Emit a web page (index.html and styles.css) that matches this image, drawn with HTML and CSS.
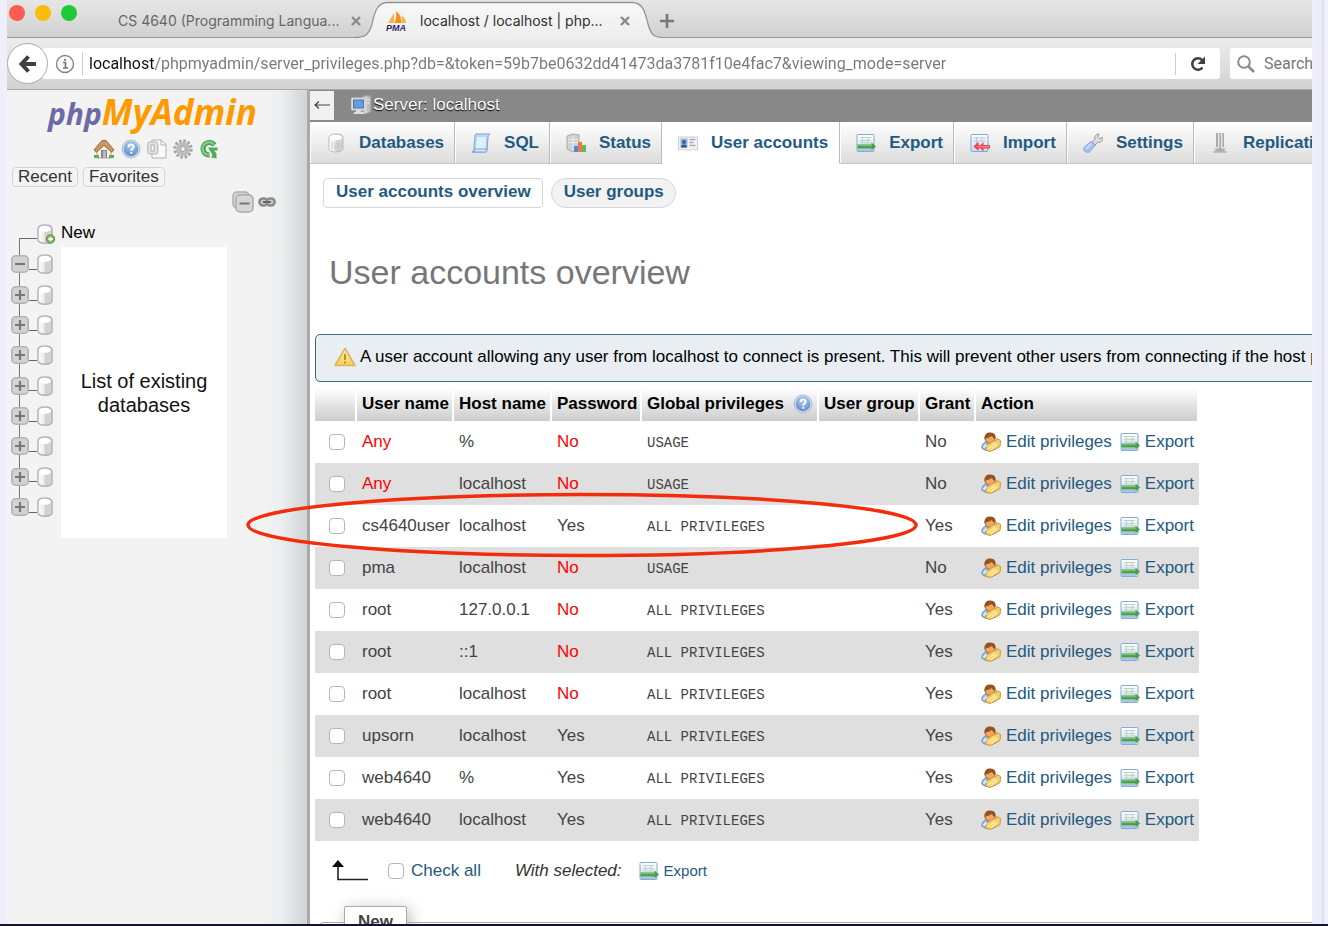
FILE: index.html
```html
<!DOCTYPE html>
<html lang="en">
<head>
<meta charset="utf-8">
<title>localhost / localhost | phpMyAdmin</title>
<link rel="stylesheet" href="styles.css">
</head>
<body>
<svg class="defs" aria-hidden="true">
  <defs>
    <linearGradient id="cyl" x1="0" x2="1" y1="0" y2="0"><stop offset="0" stop-color="#fff"/><stop offset=".4" stop-color="#eee"/><stop offset=".55" stop-color="#cfcfcf"/><stop offset="1" stop-color="#d6d6d6"/></linearGradient>
    <linearGradient id="sheet" x1="0" x2="0" y1="0" y2="1"><stop offset="0" stop-color="#fff"/><stop offset="1" stop-color="#c3d9f2"/></linearGradient>
    <radialGradient id="orb" cx=".5" cy=".3" r=".7"><stop offset="0" stop-color="#b5d0ee"/><stop offset="1" stop-color="#5a8ac6"/></radialGradient>
    <linearGradient id="warn" x1="0" x2="0" y1="0" y2="1"><stop offset="0" stop-color="#fff3b0"/><stop offset="1" stop-color="#f6cc58"/></linearGradient>
    <linearGradient id="tabfill" x1="0" x2="0" y1="0" y2="1"><stop offset="0" stop-color="#f8f8f8"/><stop offset="1" stop-color="#ededed"/></linearGradient>
  </defs>
  <symbol id="i-db" viewBox="0 0 16 20"><path d="M1 5v10.500C1 18 3 19.200 8 19.200s7-1.200 7-3.700V5c0-3-3-4-7-4S1 2 1 5z" fill="url(#cyl)" stroke="#b4b4b4" stroke-width="1.500"/><ellipse cx="8" cy="4.800" rx="5.800" ry="3" fill="#fff"/></symbol>
  <symbol id="i-tabdb" viewBox="0 0 20 20"><path d="M3 4.500v11C3 17.500 6 19 10 19s7-1.500 7-3.500v-11C17 2 14 1 10 1S3 2 3 4.500z" fill="url(#cyl)" stroke="#b9b9b9"/><ellipse cx="10" cy="4.500" rx="6" ry="2.700" fill="#fdfdfd"/><path d="M6 9v7M9 10v7M12 10v6M15 9v6" stroke="#c4c4c4"/></symbol>
  <symbol id="i-plus" viewBox="0 0 18 18"><rect x=".8" y=".8" width="16.400" height="16.400" rx="4" fill="#d3d3d3" stroke="#b2b2b2" stroke-width="1.600"/><path d="M4 9h10M9 4v10" stroke="#777" stroke-width="2.200"/></symbol>
  <symbol id="i-minus" viewBox="0 0 18 18"><rect x=".8" y=".8" width="16.400" height="16.400" rx="4" fill="#d3d3d3" stroke="#b2b2b2" stroke-width="1.600"/><path d="M4 9h10" stroke="#777" stroke-width="2.200"/></symbol>
  <symbol id="i-help" viewBox="0 0 20 20"><circle cx="10" cy="10" r="9" fill="#c4d5ea" stroke="#adc0d8"/><circle cx="10" cy="10" r="7.200" fill="url(#orb)"/><path d="M7.500 8c0-3.400 5.200-3.400 5.200-.3 0 1.900-2.400 1.800-2.400 4M10.300 13v1.800" fill="none" stroke="#fff" stroke-width="1.900"/></symbol>
  <symbol id="i-export" viewBox="0 0 20 20"><rect x="1" y="1.500" width="17" height="17" rx="1" fill="url(#sheet)" stroke="#82aadb"/><path d="M4 4.500h11M4 7.500h11M4 10h11M6.500 4v6M12 4v6" stroke="#bdd6c4"/><path d="M1.500 11.500h14V9.500l4.500 4-4.500 4v-2h-14z" fill="#4b9e48"/><path d="M2 12.700h14" stroke="#84c27c"/><path d="M2 17h13" stroke="#a9c5e6" stroke-width="2"/></symbol>
  <symbol id="i-import" viewBox="0 0 20 20"><rect x="1" y="1.500" width="17" height="17" rx="1" fill="url(#sheet)" stroke="#82aadb"/><path d="M3.500 5h12M3.500 8h12M6.500 4v7M12 4v5" stroke="#b7cbe0"/><path d="M3.500 13.500l5-5V12h2l3-3v3H20v3.500h-6.500v3l-3-3h-2V18z" fill="#ef4450"/><path d="M7 13.700h12" stroke="#ff9a9e"/></symbol>
  <symbol id="i-edit" viewBox="0 0 20 20"><path d="M.8 16c0-4 2.500-6.500 6.500-6.500S16 12 16 16c-4 3.500-12 3.500-15.200 0z" fill="#8fbdf0" stroke="#5e8fc8"/><circle cx="9" cy="6.500" r="5" fill="#eda766" stroke="#a2602c"/><path d="M3.600 7C3 2 6 .3 9.500.4 13.500.5 15.500 3.500 14.300 7 12.500 6.500 11.500 5 10.500 4 9 6 6 5.500 3.600 7z" fill="#96521f"/><path d="M5 13.500L13 8.500l1.500.5L16 6.500l3.500 2-.5 6-4.500 2.500-5.500 2.500-4.500-1.500z" fill="#f6cf68" stroke="#cb9636"/><path d="M7 17l7-6M10 18l6-6" stroke="#ffeeb0" stroke-width="1.300"/><path d="M2.500 15.500l3-3" stroke="#dcecff" stroke-width="2"/></symbol>
  <symbol id="i-home" viewBox="0 0 22 20"><path d="M4 9l7-6 7 6v10H4z" fill="#f5f1ea" stroke="#b0a596"/><path d="M1 11L9 1.500h4L21 11l-2.500 2L11 6.500 3.500 13z" fill="#cc9660" stroke="#98683a"/><path d="M8 11h6v8H8z" fill="#85858f"/><path d="M10 12h3v7h-3z" fill="#b6b7c5"/><path d="M1 16h5v3H1zM16 16h5v3h-5z" fill="#66ab56"/></symbol>
  <symbol id="i-doc" viewBox="0 0 20 20"><path d="M5 1h9l5 4.500V19H5z" fill="#fafafa" stroke="#b1b1b1"/><path d="M14 1v5h5" fill="none" stroke="#b1b1b1"/><rect x=".8" y="3" width="10" height="12" rx="2" fill="#e3e3e3" stroke="#b1b1b1"/><rect x="4" y="6" width="3" height="6" fill="#fff" stroke="#aaa"/></symbol>
  <symbol id="i-gear" viewBox="0 0 20 20"><circle cx="10" cy="10" r="8" fill="none" stroke="#a4a4a4" stroke-width="3.400" stroke-dasharray="2.500 1.690"/><circle cx="10" cy="10" r="5" fill="#d5d5d5" stroke="#bdbdbd" stroke-width="4"/><circle cx="10" cy="10" r="2.500" fill="#f3f3f3" stroke="#999"/></symbol>
  <symbol id="i-refresh" viewBox="0 0 20 20"><path d="M15.500 6A6.300 6.300 0 1 0 10.500 16" fill="none" stroke="#45a04f" stroke-width="5"/><path d="M14.800 5.600A6.300 6.300 0 1 0 10.500 15.800" fill="none" stroke="#85cc8a" stroke-width="2.200"/><path d="M9 8.500h9.500v3h-3.500l2.500 3v5l-5.500-1 1.500-2.500z" fill="#51ab58"/></symbol>
  <symbol id="i-stack" viewBox="0 0 22 22"><rect x="1" y="1" width="16" height="16" rx="4" fill="#d3d3d3" stroke="#aeaeae" stroke-width="1.500"/><rect x="4" y="4" width="17" height="17" rx="4" fill="#d6d6d6" stroke="#aaa" stroke-width="1.500"/><path d="M7.500 12.500h10" stroke="#777" stroke-width="2"/></symbol>
  <symbol id="i-link" viewBox="0 0 18 10"><rect x="1.400" y="1.500" width="8" height="7" rx="3.500" fill="#ccc" stroke="#8c8c8c" stroke-width="2.600"/><rect x="8.600" y="1.500" width="8" height="7" rx="3.500" fill="#ccc" stroke="#8c8c8c" stroke-width="2.600"/><path d="M5 5h8" stroke="#666" stroke-width="2"/></symbol>
  <symbol id="i-sql" viewBox="0 0 20 20"><path d="M5 1h14c-2 1-2 2-2 4l-1 12c0 2-1 2-2 2H1c2-1 2-2 2-4L4 4c0-2 0-2.500 1-3z" fill="#bcd7f4" stroke="#7ba2d2"/><path d="M6 4h9l-1 12H5z" fill="#e2f0fd"/><path d="M1 19c2 0 3-1 3-3h12c0 2-1 3-2 3z" fill="#d8e8fa" stroke="#7ba2d2"/></symbol>
  <symbol id="i-status" viewBox="0 0 20 20"><path d="M1 3l6-2 6 1v15l-6 2-6-3z" fill="#d0d0d0" stroke="#aaa"/><path d="M7 3v15M2 6l5 1 5-1M2 9l5 1 5-1" stroke="#eee" fill="none"/><path d="M8 13h4v6H8z" fill="#5684e2"/><path d="M12 9h4v10h-4z" fill="#f17645"/><path d="M16 12h4v7h-4z" fill="#5fba58"/></symbol>
  <symbol id="i-card" viewBox="0 0 20 20"><path d="M.5 4h19v13h-2l-2-1-2 1h-7l-2-1-2 1h-2z" fill="#f3f5f8" stroke="#ccc"/><path d="M2.500 5.500h7v9h-7z" fill="#8fb6e6"/><circle cx="6" cy="9" r="2.100" fill="#4c6285"/><path d="M3 14.500c0-4 6-4 6 0z" fill="#395273"/><path d="M11.500 6.500h6M11.500 9.500h4M11.500 12.500h6" stroke="#9dadc0" stroke-width="1.300"/></symbol>
  <symbol id="i-wrench" viewBox="0 0 20 20"><path d="M9 9l3-3c-1-3 1-5 4-5l-1.500 3L17 6l3-2c0 4-2 6-5 5l-3 3z" fill="#ddd" stroke="#999"/><path d="M1.500 14l6.500-5.500 4.500 3.500-5.500 6.500c-2.500 2.500-8.500-1-5.500-4.500z" fill="#a5c1f2" stroke="#84a2da"/><path d="M3.500 15.500l5-5" stroke="#d8e5fc" stroke-width="1.500"/></symbol>
  <symbol id="i-repl" viewBox="0 0 20 20"><path d="M7 0v14M10 0v16M13 0v14" stroke="#aaa" stroke-width="2"/><path d="M9 1v13M12 1v13" stroke="#ddd"/><path d="M3 19h14M6 16h8v2H6z" stroke="#b4b4b4" fill="#999" stroke-width="1.500"/></symbol>
  <symbol id="i-server" viewBox="0 0 20 20"><path d="M11 2l4-2 5 1v16l-5 2h-4z" fill="#bdbdbd" stroke="#999"/><path d="M15 2v16M16 5h3M16 8h3" stroke="#eee"/><rect x=".5" y="3" width="14" height="12" rx="1" fill="#e2e2e2" stroke="#ccc"/><rect x="2.500" y="5" width="10" height="8" fill="#6a9be0" stroke="#3e70ba"/><path d="M5 15h5v2h3v2H3v-2h2z" fill="#ddd"/></symbol>
  <symbol id="i-warn" viewBox="0 0 22 20"><path d="M11 1.500L21 18.500H1z" fill="url(#warn)" stroke="#dfb35a" stroke-width="1.600" stroke-linejoin="round"/><path d="M11 7v6M11 14.500v2" stroke="#bf8f2c" stroke-width="2"/></symbol>
  <symbol id="i-close" viewBox="0 0 10 10"><path d="M1 1l8 8M9 1L1 9" stroke="#8a8a8a" stroke-width="2.400"/></symbol>
</svg>

<div class="window">
  <header class="tabstrip">
    <div class="lights"><span class="light red"></span><span class="light amber"></span><span class="light green"></span></div>
    <div class="tab back"><span class="tab-title">CS 4640 (Programming Langua...</span><button class="plain" aria-label="Close tab"><svg width="10" height="10"><use href="#i-close"/></svg></button></div>
    <div class="tab front">
      <svg class="tab-shape" viewBox="0 0 308 39" aria-hidden="true"><path d="M0 39V37.500C11 37.500 14 34 17 24 20 10 23 2.500 33 2.500H277C288 2.500 290 12 293 24 296 35 299 37.500 308 37.500V39z" fill="url(#tabfill)"/><path d="M0 37.500C11 37.500 14 34 17 24 20 10 23 2.500 33 2.500H277C288 2.500 290 12 293 24 296 35 299 37.500 308 37.500" fill="none" stroke="#959595" stroke-width="1.300"/></svg>
      <svg class="favicon" width="22" height="22" viewBox="0 0 22 22"><path d="M2 13L8 3v10z" fill="#f8b24a"/><path d="M8.500 13c2-5 2-8 1.500-12 4 3 5.500 7 5 12z" fill="#f79015"/><path d="M15 13c1-3 1-5 0-8 3 2 5 5 5 8z" fill="#f8b24a"/><text x="0" y="21" font-size="9" font-weight="bold" font-style="italic" font-family="Liberation Sans, sans-serif" fill="#2c2c66">PMA</text></svg>
      <span class="tab-title">localhost / localhost | php...</span><button class="plain" aria-label="Close tab"><svg width="10" height="10"><use href="#i-close"/></svg></button>
    </div>
    <button class="plain newtab" aria-label="New tab"><svg width="14" height="14" viewBox="0 0 14 14"><path d="M7 0v14M0 7h14" stroke="#777" stroke-width="2.600"/></svg></button>
  </header>

  <div class="toolbar">
    <button class="back-btn" aria-label="Back"><svg width="20" height="20" viewBox="0 0 20 20"><path d="M10.500 2.500L3.500 10l7 7.500M4 10h14" fill="none" stroke="#3f3f3f" stroke-width="4"/></svg></button>
    <div class="urlbox">
      <svg width="20" height="20" viewBox="0 0 20 20"><circle cx="10" cy="10" r="8.500" fill="none" stroke="#858585" stroke-width="1.400"/><path d="M8 8.500h2.500v5M8 14h5M10 4.800v2.200" fill="none" stroke="#777" stroke-width="1.700"/></svg>
      <input class="url" type="text" aria-label="Address" value="localhost/phpmyadmin/server_privileges.php?db=&amp;token=59b7be0632dd41473da3781f10e4fac7&amp;viewing_mode=server">
      <button class="plain reload" aria-label="Reload"><svg width="16" height="16" viewBox="0 0 16 16"><path d="M12.500 11.500A5.700 5.700 0 1 1 12 4" fill="none" stroke="#3f3f3f" stroke-width="2.500"/><path d="M15 .5v7.500H7.500z" fill="#3f3f3f"/></svg></button>
    </div>
    <div class="searchbox">
      <svg width="18" height="18" viewBox="0 0 18 18"><circle cx="7" cy="7" r="5.800" fill="none" stroke="#8c8c8c" stroke-width="2"/><path d="M11 11l6 6" stroke="#8c8c8c" stroke-width="2.600"/></svg>
      <input type="text" aria-label="Search" placeholder="Search">
    </div>
  </div>

  <div class="page">
    <aside class="sidebar">
      <div class="logo"><span class="php">php</span><span class="mya">MyAdmin</span></div>
      <nav class="quick">
        <a href="#" aria-label="Home"><svg width="22" height="20"><use href="#i-home"/></svg></a>
        <a href="#" aria-label="Help"><svg width="20" height="20"><use href="#i-help"/></svg></a>
        <a href="#" aria-label="Documentation"><svg width="20" height="20"><use href="#i-doc"/></svg></a>
        <a href="#" aria-label="Settings"><svg width="20" height="20"><use href="#i-gear"/></svg></a>
        <a href="#" aria-label="Reload"><svg width="20" height="20"><use href="#i-refresh"/></svg></a>
      </nav>
      <div class="recent"><button>Recent</button><button>Favorites</button></div>
      <div class="tree-tools"><button class="plain" aria-label="Collapse all"><svg width="22" height="22"><use href="#i-stack"/></svg></button><button class="plain" aria-label="Unlink from main panel"><svg width="18" height="10"><use href="#i-link"/></svg></button></div>
      <div class="databases">
        <ul class="tree">
          <li class="root"><svg width="18" height="20" viewBox="0 0 18 20"><use href="#i-db" width="16" height="20"/><circle cx="13.500" cy="15" r="4.200" fill="#7db35b" stroke="#568c3a"/><path d="M11 15h5M13.500 12.500v5" stroke="#fff" stroke-width="1.600"/></svg></li>
          <li><button class="plain" aria-label="Collapse"><svg width="18" height="18"><use href="#i-minus"/></svg></button><svg width="16" height="20"><use href="#i-db"/></svg></li>
          <li><button class="plain" aria-label="Expand"><svg width="18" height="18"><use href="#i-plus"/></svg></button><svg width="16" height="20"><use href="#i-db"/></svg></li>
          <li><button class="plain" aria-label="Expand"><svg width="18" height="18"><use href="#i-plus"/></svg></button><svg width="16" height="20"><use href="#i-db"/></svg></li>
          <li><button class="plain" aria-label="Expand"><svg width="18" height="18"><use href="#i-plus"/></svg></button><svg width="16" height="20"><use href="#i-db"/></svg></li>
          <li><button class="plain" aria-label="Expand"><svg width="18" height="18"><use href="#i-plus"/></svg></button><svg width="16" height="20"><use href="#i-db"/></svg></li>
          <li><button class="plain" aria-label="Expand"><svg width="18" height="18"><use href="#i-plus"/></svg></button><svg width="16" height="20"><use href="#i-db"/></svg></li>
          <li><button class="plain" aria-label="Expand"><svg width="18" height="18"><use href="#i-plus"/></svg></button><svg width="16" height="20"><use href="#i-db"/></svg></li>
          <li><button class="plain" aria-label="Expand"><svg width="18" height="18"><use href="#i-plus"/></svg></button><svg width="16" height="20"><use href="#i-db"/></svg></li>
          <li><button class="plain" aria-label="Expand"><svg width="18" height="18"><use href="#i-plus"/></svg></button><svg width="16" height="20"><use href="#i-db"/></svg></li>
        </ul>
        <div class="db-names"><a class="new-db" href="#">New</a><p class="db-note">List of existing<br>databases</p></div>
      </div>
    </aside>

    <main class="main">
      <div class="server"><button class="toggle-nav" aria-label="Hide panel"><svg width="17" height="12" viewBox="0 0 17 12"><path d="M16 6H1M5 2.500L1 6l4 3.500" fill="none" stroke="#444" stroke-width="1.200"/></svg></button><svg width="20" height="20"><use href="#i-server"/></svg><span>Server: localhost</span></div>
      <nav class="topmenu">
        <a href="#"><svg width="20" height="20"><use href="#i-tabdb"/></svg>Databases</a>
        <a href="#"><svg width="20" height="20"><use href="#i-sql"/></svg>SQL</a>
        <a href="#"><svg width="20" height="20"><use href="#i-status"/></svg>Status</a>
        <a href="#" class="active"><svg width="20" height="20"><use href="#i-card"/></svg>User accounts</a>
        <a href="#"><svg width="20" height="20"><use href="#i-export"/></svg>Export</a>
        <a href="#"><svg width="20" height="20"><use href="#i-import"/></svg>Import</a>
        <a href="#"><svg width="20" height="20"><use href="#i-wrench"/></svg>Settings</a>
        <a href="#"><svg width="20" height="20"><use href="#i-repl"/></svg>Replication</a>
      </nav>
      <nav class="submenu"><a class="current" href="#">User accounts overview</a><a href="#">User groups</a></nav>
      <h1>User accounts overview</h1>
      <div class="notice"><svg width="22" height="20"><use href="#i-warn"/></svg><span>A user account allowing any user from localhost to connect is present. This will prevent other users from connecting if the host part</span></div>

      <table class="users">
        <colgroup><col class="c-check"><col class="c-name"><col class="c-host"><col class="c-pass"><col class="c-priv"><col class="c-group"><col class="c-grant"><col class="c-action"></colgroup>
        <thead><tr><th></th><th>User name</th><th>Host name</th><th>Password</th><th><span class="help">Global privileges <svg width="20" height="20"><use href="#i-help"/></svg></span></th><th>User group</th><th>Grant</th><th>Action</th></tr></thead>
        <tbody>
          <tr><td><input type="checkbox" aria-label="Select Any at %"></td><td class="alert">Any</td><td>%</td><td class="alert">No</td><td><code>USAGE</code></td><td></td><td>No</td><td><div class="actions"><a href="#"><svg width="20" height="20"><use href="#i-edit"/></svg>Edit privileges</a><a href="#"><svg width="20" height="20"><use href="#i-export"/></svg>Export</a></div></td></tr>
          <tr><td><input type="checkbox" aria-label="Select Any at localhost"></td><td class="alert">Any</td><td>localhost</td><td class="alert">No</td><td><code>USAGE</code></td><td></td><td>No</td><td><div class="actions"><a href="#"><svg width="20" height="20"><use href="#i-edit"/></svg>Edit privileges</a><a href="#"><svg width="20" height="20"><use href="#i-export"/></svg>Export</a></div></td></tr>
          <tr><td><input type="checkbox" aria-label="Select cs4640user"></td><td>cs4640user</td><td>localhost</td><td>Yes</td><td><code>ALL PRIVILEGES</code></td><td></td><td>Yes</td><td><div class="actions"><a href="#"><svg width="20" height="20"><use href="#i-edit"/></svg>Edit privileges</a><a href="#"><svg width="20" height="20"><use href="#i-export"/></svg>Export</a></div></td></tr>
          <tr><td><input type="checkbox" aria-label="Select pma"></td><td>pma</td><td>localhost</td><td class="alert">No</td><td><code>USAGE</code></td><td></td><td>No</td><td><div class="actions"><a href="#"><svg width="20" height="20"><use href="#i-edit"/></svg>Edit privileges</a><a href="#"><svg width="20" height="20"><use href="#i-export"/></svg>Export</a></div></td></tr>
          <tr><td><input type="checkbox" aria-label="Select root at 127.0.0.1"></td><td>root</td><td>127.0.0.1</td><td class="alert">No</td><td><code>ALL PRIVILEGES</code></td><td></td><td>Yes</td><td><div class="actions"><a href="#"><svg width="20" height="20"><use href="#i-edit"/></svg>Edit privileges</a><a href="#"><svg width="20" height="20"><use href="#i-export"/></svg>Export</a></div></td></tr>
          <tr><td><input type="checkbox" aria-label="Select root at ::1"></td><td>root</td><td>::1</td><td class="alert">No</td><td><code>ALL PRIVILEGES</code></td><td></td><td>Yes</td><td><div class="actions"><a href="#"><svg width="20" height="20"><use href="#i-edit"/></svg>Edit privileges</a><a href="#"><svg width="20" height="20"><use href="#i-export"/></svg>Export</a></div></td></tr>
          <tr><td><input type="checkbox" aria-label="Select root at localhost"></td><td>root</td><td>localhost</td><td class="alert">No</td><td><code>ALL PRIVILEGES</code></td><td></td><td>Yes</td><td><div class="actions"><a href="#"><svg width="20" height="20"><use href="#i-edit"/></svg>Edit privileges</a><a href="#"><svg width="20" height="20"><use href="#i-export"/></svg>Export</a></div></td></tr>
          <tr><td><input type="checkbox" aria-label="Select upsorn"></td><td>upsorn</td><td>localhost</td><td>Yes</td><td><code>ALL PRIVILEGES</code></td><td></td><td>Yes</td><td><div class="actions"><a href="#"><svg width="20" height="20"><use href="#i-edit"/></svg>Edit privileges</a><a href="#"><svg width="20" height="20"><use href="#i-export"/></svg>Export</a></div></td></tr>
          <tr><td><input type="checkbox" aria-label="Select web4640 at %"></td><td>web4640</td><td>%</td><td>Yes</td><td><code>ALL PRIVILEGES</code></td><td></td><td>Yes</td><td><div class="actions"><a href="#"><svg width="20" height="20"><use href="#i-edit"/></svg>Edit privileges</a><a href="#"><svg width="20" height="20"><use href="#i-export"/></svg>Export</a></div></td></tr>
          <tr><td><input type="checkbox" aria-label="Select web4640 at localhost"></td><td>web4640</td><td>localhost</td><td>Yes</td><td><code>ALL PRIVILEGES</code></td><td></td><td>Yes</td><td><div class="actions"><a href="#"><svg width="20" height="20"><use href="#i-edit"/></svg>Edit privileges</a><a href="#"><svg width="20" height="20"><use href="#i-export"/></svg>Export</a></div></td></tr>
        </tbody>
      </table>

      <div class="bulk">
        <svg class="arrow" width="38" height="22" viewBox="0 0 38 22"><path d="M7 5v14.500h30" fill="none" stroke="#222" stroke-width="1.600"/><path d="M7 0l6 7H1z" fill="#000"/></svg>
        <label><input type="checkbox">Check all</label>
        <em>With selected:</em>
        <button class="plain bulk-export"><svg width="20" height="20"><use href="#i-export"/></svg>Export</button>
      </div>
      <fieldset class="new-user"><legend>New</legend></fieldset>
      <svg class="highlight" viewBox="0 0 672 66" aria-hidden="true"><ellipse cx="336" cy="33" rx="334" ry="30.500" fill="none" stroke="#f32c0b" stroke-width="3.500"/></svg>
    </main>
  </div>
</div>
</body>
</html>
```
FILE: styles.css
```css
* { box-sizing: border-box; }
html, body { height: 100%; }
body {
  margin: 0;
  padding: 0 16px 0 7px;
  overflow: hidden;
  background: linear-gradient(to left, #f1f1fc 4px, #d9d9ea 4px, #ececf9 7px, #efeffc 16px);
  border-bottom: 2px solid #15152a;
  font: 17px/20px "Liberation Sans", Arial, sans-serif;
  color: #444;
}
svg { display: block; flex: none; }
.defs { position: absolute; width: 0; height: 0; }
a { color: #235a81; text-decoration: none; }
.plain { display: block; padding: 0; border: 0; background: none; color: inherit; font: inherit; }
.window { display: flex; flex-direction: column; height: 100%; overflow: hidden; background: #fff; }

/* Browser chrome */
.tabstrip {
  display: flex;
  flex: none;
  height: 38px;
  padding-left: 2px;
  background: linear-gradient(#e6e6e6, #d0d0d0);
  box-shadow: inset 0 -1px #999;
  font: 14px/20px Inter, Roboto, sans-serif;
}
.lights { display: flex; gap: 10px; padding-top: 5px; }
.light { width: 16px; height: 16px; border-radius: 50%; }
.red { background: #fc5b52; }
.amber { background: #fdbc0b; }
.green { background: #1dcb36; }
.tab { display: flex; align-items: center; height: 42px; position: relative; }
.tab-title { flex: 1; white-space: nowrap; }
.tab.back { width: 284px; padding: 0 0 0 41px; color: #666; }
.tab.front { width: 294px; padding: 0 25px 0 25px; color: #2f2f2f; }
.tab .plain { position: relative; }
.tab-shape { position: absolute; left: -6px; top: 0; width: 308px; height: 39px; }
.favicon, .front .tab-title { position: relative; }
.favicon { margin-right: 12px; }
.newtab { padding: 0 5px; height: 42px; }
.toolbar {
  display: flex;
  align-items: center;
  flex: none;
  height: 52px;
  background: linear-gradient(#ededed, #d2d2d2);
  border-bottom: 1px solid #a8a8a8;
  font: 16px/20px Roboto, Inter, sans-serif;
}
.back-btn {
  display: grid;
  place-items: center;
  flex: none;
  z-index: 1;
  width: 41px;
  height: 41px;
  padding: 0;
  border: 1px solid #a9a9a9;
  border-radius: 50%;
  background: #fff;
}
.urlbox, .searchbox { display: flex; align-items: center; height: 31px; background: #fff; border-radius: 3px; }
.urlbox { flex: 1; margin-left: -6px; padding-left: 13px; }
.toolbar input { min-width: 0; height: 23px; border: 0; background: none; font: inherit; outline: 0; }
.toolbar .url {
  flex: 1;
  margin-left: 7px;
  padding: 0 0 0 6px;
  border-left: 1px solid #ccc;
  color: transparent;
  background: linear-gradient(to right, #111 71px, #777 71px);
  -webkit-background-clip: text;
  background-clip: text;
}
.reload { padding: 3px 14px; border-left: 1px solid #ccc; }
.searchbox { width: 82px; margin-left: 10px; padding-left: 7px; border-radius: 3px 0 0 3px; overflow: hidden; }
.searchbox input { flex: none; width: 180px; padding: 0 0 0 9px; }
.searchbox input::placeholder { color: #777; opacity: 1; }

/* Page */
.page { display: flex; flex: 1; min-height: 0; overflow: hidden; }
.sidebar {
  flex: none;
  width: 303px;
  padding: 4px 0 0;
  border-right: 3px solid #a9a9a9;
  background: linear-gradient(to right, #f3f3f3 255px, #eceeef 275px, #d0d4d8);
}
.logo { margin-left: 41px; font: italic bold 35px/36px "Open Sans", "Noto Sans", sans-serif; white-space: nowrap; }
.php { color: #6c6aa8; font-size: 30px; }
.mya { color: #f90; }
.quick { display: flex; gap: 6px; padding: 7px 0 0 86px; }
.recent { display: flex; gap: 5px; padding: 8px 0 0 5px; }
.recent button { height: 20px; padding: 0 5px; border: 1px solid #d5d5d5; border-radius: 4px; background: #f4f4f4; font: 17px/18px "Liberation Sans", Arial, sans-serif; color: #333; }
.tree-tools { display: flex; align-items: center; gap: 4px; padding: 4px 0 0 225px; }
.databases { display: flex; padding-top: 6px; }
.tree { display: grid; grid-auto-rows: 1fr; width: 54px; height: 303px; margin: 0; padding: 0 0 0 4px; list-style: none; }
.tree li {
  display: flex;
  align-items: center;
  gap: 8px;
  background:
    linear-gradient(#777, #777) 8px 0 / 1px 100% no-repeat,
    linear-gradient(#666, #666) 18px 20px / 8px 1px no-repeat;
}
.tree li:last-child { background: linear-gradient(#777, #777) 8px 0 / 1px 8px no-repeat, linear-gradient(#666, #666) 18px 20px / 8px 1px no-repeat; }
.tree .root { padding-left: 26px; background: linear-gradient(#777, #777) 8px 19px / 1px 12px no-repeat, linear-gradient(#666, #666) 8px 19px / 18px 1px no-repeat; }
.db-names { width: 166px; }
.new-db { display: block; height: 28px; color: #000; line-height: 28px; }
.db-note { display: grid; place-content: center; height: 291px; margin: 0; background: #fff; color: #111; font-size: 20px; line-height: 24px; text-align: center; }

/* The marker ring reaches past this panel's edge into the sidebar. */
.main { position: relative; flex: 1; min-width: 0; background: #fff; }
.server { display: flex; align-items: center; height: 32px; padding-bottom: 2px; background: #888; color: #fff; text-shadow: 0 1px 1px #000; }
.server > svg { margin: 0 2px 0 17px; }
.toggle-nav { display: grid; place-items: center; width: 24px; height: 29px; padding: 0; border: 0; background: #f1f1f1; }
.topmenu { display: flex; }
.topmenu a {
  display: flex;
  align-items: center;
  gap: 13px;
  height: 42px;
  padding: 0 10px 0 16px;
  border-right: 1px solid #bbb;
  border-bottom: 1px solid #c6c6c6;
  box-shadow: inset 1px 0 #fff;
  background: linear-gradient(#fff, #dcdcdc);
  font-weight: bold;
  white-space: nowrap;
}
.topmenu .active { padding-right: 11px; background: #fff; border-bottom-color: #fff; }
.submenu { display: flex; gap: 8px; padding: 14px 13px 0; }
.submenu a { padding: 3px 11px 5px 12px; border: 1px solid #d3d7dc; border-radius: 16px; background: #f2f2f2; font-weight: bold; }
.submenu .current { border-radius: 4px; background: #fff; }
h1 { margin: 44px 19px 0; color: #777; font-size: 34px; font-weight: normal; line-height: 40px; }
.notice {
  display: flex;
  align-items: center;
  gap: 4px;
  height: 48px;
  margin: 42px -20px 0 5px;
  padding: 0 18px 2px;
  border: 1px solid #3a6c7e;
  border-radius: 5px 0 0 5px;
  background: #e8eef1;
  color: #000;
  white-space: nowrap;
}
.users { width: 884px; margin: 6px 0 0 5px; table-layout: fixed; border-collapse: separate; border-spacing: 0; }
.c-check { width: 42px; }
.c-name { width: 97px; }
.c-host { width: 98px; }
.c-pass { width: 90px; }
.c-priv { width: 177px; }
.c-group { width: 101px; }
.c-grant { width: 56px; }
.c-action { width: 223px; }
.users th { height: 33px; padding: 0 0 2px 5px; background: linear-gradient(#fff, #ccc); box-shadow: inset -2px 0 #fff; color: #000; text-align: left; white-space: nowrap; }
.users td { height: 42px; padding: 0 0 0 5px; white-space: nowrap; }
.users tr:nth-child(even) td { background: #dfdfdf; }
.users .alert { color: #f00; }
.help { display: flex; align-items: center; gap: 9px; }
code { font: 14px/20px "Liberation Mono", "Courier New", monospace; }
.actions { display: flex; gap: 8px; }
.actions a { display: flex; align-items: center; gap: 5px; }
input[type="checkbox"] { appearance: none; flex: none; display: block; width: 16px; height: 16px; margin: 0; border: 1px solid #b5b5b5; border-radius: 4px; background: #fff; }
td input[type="checkbox"] { margin-left: 9px; }
.bulk { display: flex; align-items: center; height: 60px; padding-left: 21px; }
.bulk label { display: flex; align-items: center; gap: 7px; margin: 0 34px 0 19px; color: #235a81; }
.bulk em { color: #333; }
.bulk-export { display: flex; align-items: center; gap: 5px; margin-left: 17px; color: #235a81; font-size: 15px; }
.new-user { height: 60px; margin: 5px -20px 0 9px; padding: 0 0 0 24px; border: 1px solid #aaa; border-radius: 4px; }
.new-user legend { padding: 5px 13px; border: 1px solid #aaa; border-radius: 2px; background: #fff; box-shadow: 3px 3px 15px #bbb; font-weight: bold; }
.highlight { position: absolute; left: -64px; top: 402px; width: 672px; height: 66px; }
```
